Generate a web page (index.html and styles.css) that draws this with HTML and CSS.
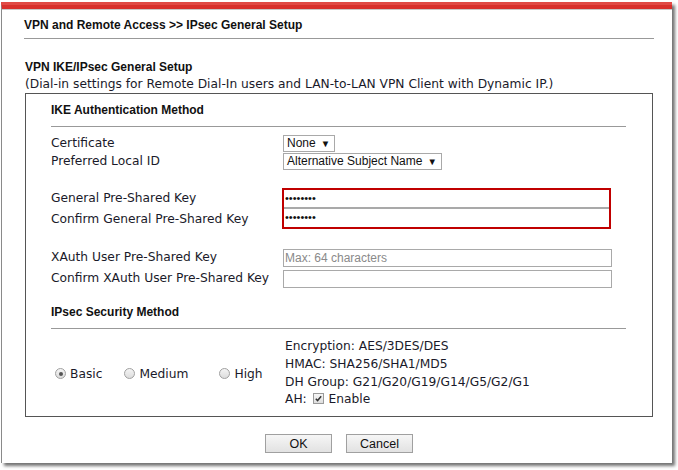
FILE: index.html
```html
<!DOCTYPE html>
<html>
<head>
<meta charset="utf-8">
<link rel="stylesheet" href="styles.css">
</head>
<body>
<div class="frame">
  <div class="content">
    <h1 class="title">VPN and Remote Access &gt;&gt; IPsec General Setup</h1>
    <h2 class="subtitle">VPN IKE/IPsec General Setup</h2>
    <p class="note">(Dial-in settings for Remote Dial-In users and LAN-to-LAN VPN Client with Dynamic IP.)</p>
    <div class="box">
      <div class="section-head">IKE Authentication Method</div>
      <div class="grid rows-a">
        <div class="label">Certificate</div>
        <div class="ctl"><span class="select">None<span class="arrow">▼</span></span></div>
        <div class="label">Preferred Local ID</div>
        <div class="ctl"><span class="select">Alternative Subject Name<span class="arrow">▼</span></span></div>
      </div>
      <div class="grid rows-b">
        <div class="label l1">General Pre-Shared Key</div>
        <div class="ctl span2">
          <div class="redbox">
            <div class="pw">••••••••</div>
            <div class="pw pw2">••••••••</div>
          </div>
        </div>
        <div class="label l2">Confirm General Pre-Shared Key</div>
      </div>
      <div class="grid rows-c">
        <div class="label">XAuth User Pre-Shared Key</div>
        <div class="ctl"><div class="field placeholder">Max: 64 characters</div></div>
        <div class="label">Confirm XAuth User Pre-Shared Key</div>
        <div class="ctl"><div class="field"></div></div>
      </div>
      <div class="section-head sec2">IPsec Security Method</div>
      <div class="grid rows-d">
        <div class="radios">
          <span class="opt"><span class="radio checked"></span>Basic</span>
          <span class="opt"><span class="radio"></span>Medium</span>
          <span class="opt"><span class="radio"></span>High</span>
        </div>
        <div class="info">
          <div>Encryption: AES/3DES/DES</div>
          <div>HMAC: SHA256/SHA1/MD5</div>
          <div>DH Group: G21/G20/G19/G14/G5/G2/G1</div>
          <div>AH: <span class="check"><svg viewBox="0 0 10 10" width="9" height="9"><path d="M2 5.2 L4 7.3 L8 2.5" fill="none" stroke="#333" stroke-width="1.6"/></svg></span> Enable</div>
        </div>
      </div>
    </div>
    <div class="buttons">
      <span class="btn">OK</span>
      <span class="btn">Cancel</span>
    </div>
  </div>
</div>
</body>
</html>
```

FILE: styles.css
```css
html, body {
  margin: 0;
  padding: 0;
  background: #ffffff;
}
body {
  width: 678px;
  height: 470px;
  overflow: hidden;
  font-family: "DejaVu Sans", Verdana, sans-serif;
  font-size: 12.25px;
  color: #1a1a2a;
}
.frame {
  margin: 2px 0 0 1px;
  width: 670px;
  height: 454px;
  border-left: 1px solid #8a8a8a;
  border-top: 7px solid #d8302c;
  background: #fff;
  box-shadow: 3px 3px 3px rgba(0, 0, 0, 0.55), inset 0 1px 0 #c8c8c8;
  position: relative;
}
.frame::before {
  content: "";
  position: absolute;
  top: -7px;
  left: -1px;
  right: 0;
  height: 3px;
  background: #e04a45;
}
.content {
  margin-left: 22px;
  width: 630px;
  padding-top: 9px;
}
.title {
  margin: 0;
  font-family: "Liberation Sans", Arial, sans-serif;
  font-weight: bold;
  font-size: 12px;
  color: #111;
  line-height: 15px;
  padding-bottom: 5px;
  border-bottom: 1px solid #999;
}
.subtitle {
  margin: 21px 0 0 1px;
  font-family: "Liberation Sans", Arial, sans-serif;
  font-weight: bold;
  font-size: 12px;
  color: #111;
  line-height: 15px;
}
.note {
  margin: 2px 0 0 1px;
  line-height: 15px;
}
.box {
  margin: 1px 0 0 1px;
  height: 322px;
  border: 1px solid #555;
  padding: 0 26px 0 25px;
  box-sizing: content-box;
  width: 575px;
}
.section-head {
  margin-top: 9px;
  font-family: "Liberation Sans", Arial, sans-serif;
  font-weight: bold;
  font-size: 12px;
  line-height: 15px;
  color: #111;
  padding-bottom: 8px;
  border-bottom: 1px solid #999;
}
.grid {
  display: grid;
  grid-template-columns: 232px 1fr;
}
.label {
  line-height: 18px;
}
.ctl {
  display: flex;
  align-items: center;
}
.rows-a {
  margin-top: 7px;
}
.select {
  display: inline-flex;
  align-items: center;
  height: 15px;
  border: 1px solid #a9a9a9;
  padding: 0 4px 0 3px;
  font-family: "Liberation Sans", Arial, sans-serif;
  font-size: 12px;
  color: #111;
  background: #fff;
}
.arrow {
  font-size: 9.5px;
  margin-left: 5px;
}
.rows-b {
  margin-top: 18px;
  grid-template-rows: 20px 20px;
}
.rows-b .l1 { line-height: 20px; }
.rows-b .l2 { line-height: 20px; padding-top: 1px; grid-column: 1; grid-row: 2; }
.span2 {
  grid-column: 2;
  grid-row: 1 / span 2;
  align-items: stretch;
  margin-left: -1px;
}
.redbox {
  width: 325px;
  height: 37px;
  border: 2px solid #c00000;
  display: flex;
  flex-direction: column;
}
.pw {
  height: 17px;
  line-height: 17px;
  font-family: "Liberation Sans", Arial, sans-serif;
  font-size: 11px;
  padding-left: 1px;
  color: #111;
  border-bottom: 1px solid #a9a9a9;
}
.pw2 {
  border-top: 1px solid #a9a9a9;
  border-bottom: none;
}
.rows-c {
  margin-top: 19px;
  grid-template-rows: 21px 21px;
}
.rows-c .label { line-height: 21px; }
.field {
  width: 326px;
  height: 16px;
  border: 1px solid #a9a9a9;
  font-family: "Liberation Sans", Arial, sans-serif;
  font-size: 12px;
  line-height: 16px;
  padding-left: 1px;
}
.placeholder {
  color: #8a8a8a;
}
.sec2 {
  margin-top: 16px;
}
.rows-d {
  margin-top: 9px;
  grid-template-columns: 234px 1fr;
  align-items: center;
}
.radios {
  display: flex;
  align-items: center;
  padding-left: 4px;
  margin-top: 0;
}
.opt {
  display: inline-flex;
  align-items: center;
  gap: 4px;
}
.opt:nth-child(2) { margin-left: 22px; }
.opt:nth-child(3) { margin-left: 31px; }
.radio {
  width: 9px;
  height: 9px;
  border-radius: 50%;
  border: 1px solid #a0a0a0;
  background: linear-gradient(#f4f4f4, #dcdcdc);
  position: relative;
}
.radio.checked::after {
  content: "";
  position: absolute;
  left: 2.5px;
  top: 2.5px;
  width: 4px;
  height: 4px;
  border-radius: 50%;
  background: #555;
}
.info div {
  line-height: 17.8px;
}
.check {
  display: inline-block;
  width: 9px;
  height: 9px;
  border: 1px solid #9a9a9a;
  background: linear-gradient(#f6f6f6, #dedede);
  vertical-align: -1px;
  margin: 0 1px 0 2px;
  line-height: 0;
}
.check svg { display: block; }
.buttons {
  display: flex;
  justify-content: center;
  gap: 14px;
  margin-top: 17px;
}
.btn {
  display: inline-flex;
  align-items: center;
  justify-content: center;
  width: 65px;
  height: 17px;
  border: 1px solid #a0a0a0;
  background: linear-gradient(#f6f6f6, #e2e2e2);
  font-family: "Liberation Sans", Arial, sans-serif;
  font-size: 12.5px;
  color: #111;
}
```
